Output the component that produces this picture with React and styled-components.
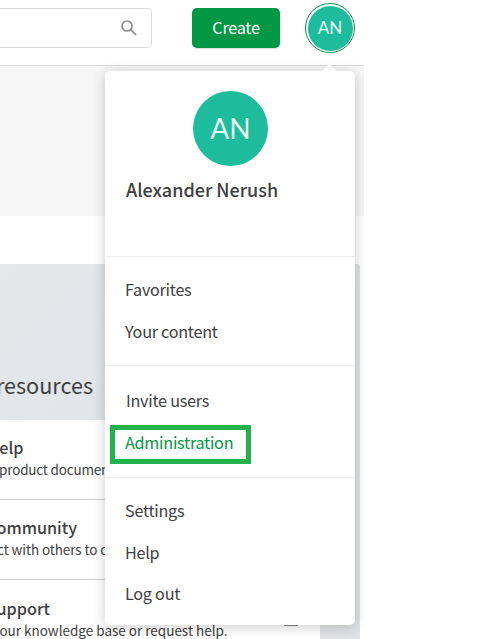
import React from 'react';
import styled, { createGlobalStyle } from 'styled-components';

const Global = createGlobalStyle`
  * { box-sizing: border-box; }
  body { margin: 0; background: #fff; color: #404040; font-family: "Noto Sans CJK SC", "Open Sans", sans-serif; overflow: hidden; }
`;
const Page = styled.div`
  position: relative; width: 364px; height: 639px; overflow: hidden; background: #fff;
`;
const Header = styled.header`
  display: flex; align-items: flex-start; height: 66px; border-bottom: 1px solid #d9d9d9;
`;
const Search = styled.div`
  display: flex; align-items: center; justify-content: flex-end;
  width: 152px; height: 40px; margin-top: 8px; padding-right: 14px;
  border: 1px solid #d9d9d9; border-left: 0; border-radius: 0 5px 5px 0;
`;
const Create = styled.button`
  width: 88px; height: 40px; margin: 8px 0 0 40px; padding: 0 0 2px; border: 0; border-radius: 5px;
  background: #009845; color: #fff; font: 400 16.2px/38px "Noto Sans CJK SC", sans-serif; letter-spacing: -0.25px;
  box-shadow: 0 1px 2px rgba(0,0,0,.15);
`;
const Ring = styled.div`
  display: grid; place-items: center; width: 50px; height: 50px; margin: 3px 0 0 25px;
  border: 1px solid #009845; border-radius: 50%;
`;
const Avatar = styled.div`
  display: grid; place-items: center; width: ${p => p.$size}px; height: ${p => p.$size}px;
  padding-bottom: 2px; border-radius: 50%; background: #1dbc9c; color: #e8fbf6;
  font: 400 ${p => p.$font}px/1 Lato, sans-serif;
`;
const Band = styled.div`height: 150px; background: #f6f6f6;`;
const Resources = styled.section`
  width: 360px; height: 375px; margin-top: 48px; border-radius: 0 4px 0 0;
  background: #dfe3e7;
`;
const Hero = styled.div`
  height: 156px; padding-top: 104px; border-radius: 0 4px 0 0;
  background: linear-gradient(135deg, #e4e8eb, #dfe3e7);
`;
const Line = styled.div`
  display: flex; justify-content: flex-end; width: ${p => p.$right}px; height: ${p => p.$h}px;
  font-size: ${p => p.$size}px; font-weight: ${p => p.$weight || 400}; line-height: ${p => p.$h}px;
  letter-spacing: ${p => p.$ls || 0}px; white-space: nowrap;
`;
const Card = styled.div`
  width: 320px; height: 80px; padding-top: ${p => p.$top || 15}px; background: #fff; border-bottom: 1px solid #ccc;
`;
const Menu = styled.nav`
  position: absolute; left: 105px; top: 71px; width: 250px; height: 554px;
  background: #fff; border-radius: 5px; box-shadow: 0 2px 14px rgba(0,0,0,.2);
`;
const Arrow = styled.div`
  position: absolute; right: 18px; top: -7px; border: 8px solid transparent; border-top: 0; border-bottom-color: #fff;
`;
const Profile = styled.div`
  height: 186px; padding: 20px 0 0 88px; border-bottom: 1px solid #eee;
`;
const Name = styled.div`
  margin: 11px 0 0 -67px; font-size: 18px; font-weight: 500; line-height: 24px; white-space: nowrap;
`;
const Group = styled.div`
  height: ${p => p.$h}px; padding-top: ${p => p.$top}px;
  & + & { border-top: 1px solid #eee; }
`;
const Item = styled.a`
  display: block; height: ${p => p.$h || 42}px; padding-left: ${p => p.$x || 20}px;
  font-size: 16.2px; line-height: 26px; letter-spacing: -0.26px; white-space: nowrap;
  color: ${p => p.$active ? '#009845' : '#404040'};
`;
const Highlight = styled.div`
  position: absolute; left: 5px; top: 354px; width: 141px; height: 39px; border: 5px solid #22b24c;
`;
const IconHint = styled.div`
  position: absolute; left: 284px; top: 624px; width: 14px; height: 2px; background: #888;
`;

export default function App() {
  return (
    <>
      <Global />
      <Page>
        <Header>
          <Search>
            <svg width="16" height="16" viewBox="0 0 16 16" fill="none" stroke="#8c8c8c" strokeWidth="1.7">
              <circle cx="6" cy="6" r="5" /><path d="M9.5 9.5L15 15" />
            </svg>
          </Search>
          <Create>Create</Create>
          <Ring><Avatar $size={45} $font={17}>AN</Avatar></Ring>
        </Header>
        <Band />
        <Resources>
          <Hero><Line $right={93} $h={34} $size={21.6}>resources</Line></Hero>
          <Card><Line $right={23.5} $h={24} $size={16.2} $weight={500}>elp</Line><Line $right={109} $h={20} $size={13.5} $ls={-0.2}>product documen</Line></Card>
          <Card><Line $right={77} $h={24} $size={16.2} $weight={500}>ommunity</Line><Line $right={107} $h={20} $size={13.5} $ls={-0.1}>ct with others to c</Line></Card>
          <Card $top={16}><Line $right={50} $h={24} $size={16.2} $weight={500}>upport</Line><Line $right={227.5} $h={20} $size={13.5}>our knowledge base or request help.</Line></Card>
        </Resources>
        <IconHint />
        <Menu>
          <Arrow />
          <Profile>
            <Avatar $size={75} $font={28}>AN</Avatar>
            <Name>Alexander Nerush</Name>
          </Profile>
          <Group $h={108} $top={19}><Item>Favorites</Item><Item>Your content</Item></Group>
          <Group $h={112} $top={21}><Item $x={21}>Invite users</Item><Item $active>Administration</Item></Group>
          <Group $h={148} $top={19}><Item>Settings</Item><Item $h={41}>Help</Item><Item>Log out</Item></Group>
          <Highlight />
        </Menu>
      </Page>
    </>
  );
}
